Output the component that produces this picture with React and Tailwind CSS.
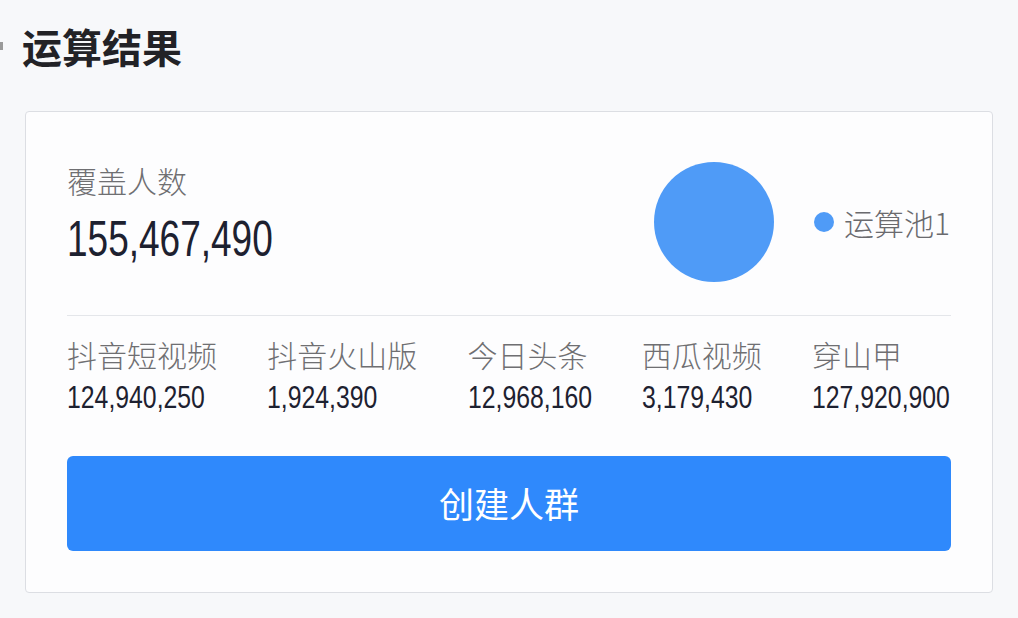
const sans = "font-['Noto_Sans_CJK_SC','Liberation_Sans',sans-serif]";
const num = "font-['Liberation_Sans',sans-serif]";

const channels = [
  { name: "抖音短视频", value: "124,940,250", w: "w-[150px]" },
  { name: "抖音火山版", value: "1,924,390", w: "w-[150px]" },
  { name: "今日头条", value: "12,968,160", w: "w-[124px]" },
  { name: "西瓜视频", value: "3,179,430", w: "w-[120px]" },
  { name: "穿山甲", value: "127,920,900", w: "w-[139px]" },
];

export default function App() {
  return (
    <div className={`w-[1018px] h-[618px] bg-[#f7f8fa] relative overflow-hidden ${sans}`}>
      <div className="absolute left-0 top-[42px] w-[3px] h-[8px] bg-[#9a9a9a]" />
      <div className="pt-[22px] pl-[22px]">
        <h1 className="text-[40px] leading-[48px] font-bold text-[#222226]">运算结果</h1>
      </div>
      <div className="ml-[25px] mt-[41px] w-[968px] h-[482px] bg-[#fdfdfe] border border-[#dcdee3] rounded-[4px] px-[41px]">
        <div className="flex items-start justify-between h-[204px] border-b border-[#e4e6ea]">
          <div className="pt-[50px]">
            <div className="text-[30px] leading-[36px] font-light text-[#6f6f72]">覆盖人数</div>
            <div className={`mt-[13px] text-[50px] leading-[56px] text-[#1d2130] whitespace-nowrap ${num}`}>
              <span className="inline-block origin-left scale-x-[0.74]">155,467,490</span>
            </div>
          </div>
          <div className="flex items-center pt-[50px] pr-[1px]">
            <div className="w-[120px] h-[120px] rounded-full bg-[#4f9bf7]" />
            <div className="ml-[40px] w-[20px] h-[20px] rounded-full bg-[#4f9bf7]" />
            <div className="ml-[10px] text-[30px] leading-[36px] font-light text-[#6a6a6e]">运算池1</div>
          </div>
        </div>
        <div className="flex justify-between pt-[20px]">
          {channels.map((c) => (
            <div key={c.name} className={c.w}>
              <div className="text-[30px] leading-[36px] font-light text-[#6f6f72] whitespace-nowrap">{c.name}</div>
              <div className={`mt-[8px] text-[31px] leading-[36px] text-[#1d2130] whitespace-nowrap ${num}`}>
                <span className="inline-block origin-left scale-x-[0.8]">{c.value}</span>
              </div>
            </div>
          ))}
        </div>
        <button className="mt-[40px] w-full h-[95px] rounded-[6px] bg-[#2f89fc] text-white text-[35px] font-normal">
          创建人群
        </button>
      </div>
    </div>
  );
}
